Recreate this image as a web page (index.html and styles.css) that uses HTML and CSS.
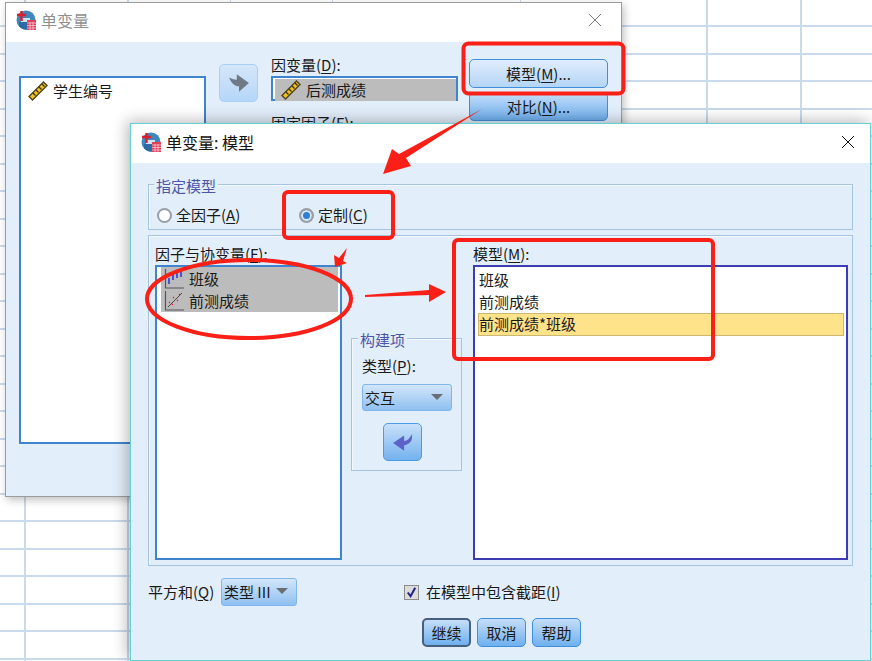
FILE: index.html
```html
<!DOCTYPE html>
<html lang="zh">
<head>
<meta charset="utf-8">
<title>单变量: 模型</title>
<link rel="stylesheet" href="styles.css">
</head>
<body>
<svg width="0" height="0" class="defs">
  <defs>
    <symbol id="app" viewBox="0 0 20 20">
      <circle cx="10" cy="10" r="9.5" fill="#3f86bd"/>
      <path d="M3 16a9.5 9.5 0 0 0 11 3V12H3z" fill="#2b6aa3"/>
      <rect x="5" y="8" width="9" height="4" fill="#cfe3f3"/>
      <path d="M5.5 1v10M1 5h9" stroke="#d8202c" stroke-width="2.4" fill="none"/>
      <rect x="11" y="10" width="9" height="10" fill="#e0405c"/>
      <path d="M11 13h9M11 15.5h9M11 18h9M14 12v8M17 12v8" stroke="#f7c4cd" stroke-width=".8"/>
    </symbol>
    <symbol id="ruler" viewBox="0 0 20 20">
      <path d="M1 15.500 15.500 1l3.500 3.500L4.500 19z" fill="#f2c21c" stroke="#4a4420" stroke-width="1.400"/>
      <path d="M5 12l2.500 2.500M8 9l2.500 2.500M11 6l2.500 2.500M14 3l2.500 2.500" stroke="#3a3518" stroke-width="1.400"/>
    </symbol>
    <symbol id="nominal" viewBox="0 0 20 20">
      <path d="M1.500 0v19H20" stroke="#55555f" stroke-width="1.200" fill="none"/>
      <path d="M5 15V9M9 11V4M13 9V3M17 8V1" stroke="#2a3ae0" stroke-width="1.600"/>
    </symbol>
    <symbol id="scale" viewBox="0 0 20 20">
      <path d="M1.500 0v19H20" stroke="#55555f" stroke-width="1.200" fill="none"/>
      <path d="M4 16 18 2" stroke="#55403f" stroke-width="1"/>
      <path d="M5 11l1 1M8 13l1 1M9 6l1 1M13 9l1 1M15 3l1 1" stroke="#e0203a" stroke-width="1.200"/>
    </symbol>
    <symbol id="arrow" viewBox="0 0 20 20">
      <path d="M1 5c2 1 4 2 7 2V2l11 8-9 8v-5C6 13 3 10 1 5z" fill="currentColor"/>
    </symbol>
    <symbol id="back" viewBox="0 0 20 20">
      <path d="M18 3c1 5-1 9-7 10v5L1 11 11 4v5c3 0 5-2 7-6z" fill="currentColor"/>
    </symbol>
  </defs>
</svg>

<section class="window back-window">
  <header class="titlebar dim">
    <svg class="app-icon"><use href="#app"/></svg>
    <span>单变量</span>
    <svg class="close" viewBox="0 0 14 14"><path d="M1 1l12 12M13 1 1 13"/></svg>
  </header>
  <div class="back-body">
    <ul class="list back-list">
      <li class="var"><svg class="var-icon"><use href="#ruler"/></svg>学生编号</li>
    </ul>
    <button class="icon-btn gray-arrow"><svg><use href="#arrow"/></svg></button>
    <div class="back-fields">
      <div class="label dep-label">因变量(<u>D</u>):</div>
      <div class="dep-box"><div class="dep-item"><svg class="var-icon"><use href="#ruler"/></svg>后测成绩</div></div>
      <div class="label fixed">固定因子(<u>F</u>):</div>
    </div>
    <div class="back-buttons">
      <button class="btn wide light">模型(<u>M</u>)...</button>
      <button class="btn wide">对比(<u>N</u>)...</button>
    </div>
  </div>
</section>

<section class="window front-window">
  <header class="titlebar">
    <svg class="app-icon"><use href="#app"/></svg>
    <span>单变量: 模型</span>
    <svg class="close dark" viewBox="0 0 14 14"><path d="M1 1l12 12M13 1 1 13"/></svg>
  </header>
  <div class="front-body">
    <div class="group spec">
      <div class="legend">指定模型</div>
      <div class="radios">
        <label class="radio"><span class="dot"></span>全因子(<u>A</u>)</label>
        <label class="radio"><span class="dot on"></span>定制(<u>C</u>)</label>
      </div>
    </div>
    <div class="group panel">
      <div class="col col-left">
        <div class="label list-label">因子与协变量(<u>F</u>):</div>
        <ul class="list factors">
          <li class="sel"><svg class="var-icon"><use href="#nominal"/></svg>班级</li>
          <li class="sel"><svg class="var-icon"><use href="#scale"/></svg>前测成绩</li>
        </ul>
      </div>
      <div class="group build">
        <div class="legend">构建项</div>
        <div class="label">类型(<u>P</u>):</div>
        <div class="select type-select">交互<span class="caret"></span></div>
        <button class="icon-btn build-btn"><svg><use href="#back"/></svg></button>
      </div>
      <div class="col col-right">
        <div class="label list-label">模型(<u>M</u>):</div>
        <ul class="list model">
          <li>班级</li>
          <li>前测成绩</li>
          <li class="hl">前测成绩*班级</li>
        </ul>
      </div>
    </div>
    <div class="sum-row">
      <span class="sum-label">平方和(<u>Q</u>)</span>
      <div class="select sum-select">类型 III<span class="caret"></span></div>
      <label class="check"><span class="box"><svg viewBox="0 0 14 14"><path d="M3 7l3 4 5-9"/></svg></span>在模型中包含截距(<u>I</u>)</label>
    </div>
    <div class="actions">
      <button class="btn small default">继续</button>
      <button class="btn small">取消</button>
      <button class="btn small">帮助</button>
    </div>
  </div>
</section>

<svg class="marks" viewBox="0 0 872 661">
  <g fill="none" stroke="#fa2018" stroke-width="4">
    <rect x="463.500" y="43.500" width="160" height="50" rx="5"/>
    <rect x="284" y="192" width="109" height="46" rx="4"/>
    <rect x="454" y="240" width="259" height="119" rx="4"/>
    <ellipse cx="249" cy="299" rx="102" ry="39"/>
  </g>
  <g fill="#fa2018">
    <polygon points="482,109 406,158 411,166 383,174 392,149 399,154"/>
    <polygon points="335,267 334,255 339,258 347,248 343,261 347,263"/>
    <polygon points="365,295 429,290 429,284 446,292 429,302 429,295 365,297"/>
  </g>
</svg>
</body>
</html>
```
FILE: styles.css
```css
* { box-sizing: border-box; }
html, body { margin: 0; height: 100%; }
body {
  position: relative;
  width: 872px;
  height: 661px;
  overflow: hidden;
  font: 15px/20px "Noto Sans CJK SC", "Liberation Sans", sans-serif;
  color: #1a1a1a;
  background-color: #fff;
  background-image:
    repeating-linear-gradient(to bottom, transparent 0 25px, #c9daec 25px 27px, transparent 27px 27.5px),
    linear-gradient(to right, transparent 0 24px, #c9daec 24px 26px, transparent 26px 127px, #c9daec 127px 129px, transparent 129px 230px, #c9daec 230px 231px, transparent 231px 332px, #c9daec 332px 333px, transparent 333px 520px, #c9daec 520px 521px, transparent 521px 706px, #c9daec 706px 708px, transparent 708px 800px, #c9daec 800px 802px, transparent 802px);
}
.defs { position: absolute; }
u { text-underline-offset: 2px; }
ul { list-style: none; margin: 0; padding: 0; }
button { font: inherit; color: inherit; padding: 0; cursor: default; }

.window { position: absolute; background: #e2eefa; }
.back-window {
  left: 5px; top: 2px; width: 617px; height: 495px;
  border: 1px solid #9c9c9c;
  box-shadow: 2px 3px 8px rgba(0, 0, 0, .25);
}
.front-window {
  left: 130px; top: 123px; width: 741px; height: 538px;
  border: 1px solid #66d0d4;
  box-shadow: -3px -2px 14px rgba(0, 0, 0, .28);
}
.titlebar {
  display: flex; align-items: center; height: 39px;
  padding: 0 12px 3px 10px; background: #fff; font-size: 16px; color: #111;
}
.titlebar.dim { color: #8f8f8f; padding-bottom: 5px; }
.app-icon { width: 20px; height: 20px; margin-right: 5px; }
.close { width: 14px; height: 14px; margin-left: auto; margin-right: 7px; fill: none; stroke: #777; stroke-width: 1; }
.close.dark { stroke: #111; margin-right: 3px; }

.list { background: #fff; border: 2px solid #3f84cd; }
.var-icon { width: 20px; height: 20px; margin-right: 5px; flex: none; }
.var, .dep-item, .sel { display: flex; align-items: center; }

.back-body { display: flex; align-items: flex-start; padding: 13px 0 0 13px; }
.back-list { width: 187px; height: 368px; margin-top: 21px; padding: 3px 0 0 7px; }
.gray-arrow { margin: 9px 13px 0; color: #6f7a86; }
.icon-btn {
  display: flex; align-items: center; justify-content: center;
  width: 39px; height: 38px; border: 1px solid #a9cff3; border-radius: 5px;
  background: linear-gradient(#d5e7fa, #b5d6f8);
}
.icon-btn svg { width: 22px; height: 22px; }
.back-fields { width: 187px; margin-right: 11px; }
.label { height: 19px; line-height: 19px; }
.dep-label { margin-bottom: 2px; }
.dep-box { height: 25px; border: 2px solid #3f84cd; background: #fff; padding: 1px 0 0 2px; }
.dep-item { height: 22px; background: #bcbcbc; padding-left: 6px; }
.fixed { margin-top: 12px; }
.back-buttons { display: flex; flex-direction: column; gap: 4px; margin-top: 4px; }

.btn {
  border: 1px solid #3f8fdc; border-radius: 5px;
  background: linear-gradient(#c5def9, #6fb0ee);
  text-align: center;
}
.btn.wide { width: 139px; height: 29px; }
.btn.light { background: linear-gradient(#e0edfc, #b4d5f6); }

.front-body { padding: 21px 17px 0 17px; }
.group { border: 1px solid #a6c3e0; box-shadow: inset 1px 1px 0 #f4f9fe; }
.legend {
  width: fit-content; height: 20px; margin: -9px 0 0 5px; padding: 0 2px;
  background: #e2eefa; color: #4b56a8; line-height: 20px;
}
.spec { height: 46px; }
.radios { display: flex; padding: 0 0 0 8px; margin-top: 8px; }
.radio { display: flex; align-items: center; height: 22px; width: 142px; }
.dot {
  width: 15px; height: 15px; margin-right: 4px; border-radius: 50%;
  border: 2px solid #9a9fa6; background: #fff;
}
.dot.on { background: #2f7fd6; box-shadow: inset 0 0 0 2px #dfe8f2; }

.panel {
  display: grid; grid-template-columns: 187px 113px 375px; column-gap: 9px;
  height: 331px; margin-top: 5px; padding: 9px 0 0 6px;
}
.col { display: flex; flex-direction: column; }
.list-label { margin-top: -1px; margin-bottom: 1px; }
.factors { height: 295px; padding: 0 0 0 4px; margin-top: 1px; }
.factors .sel { height: 22.500px; width: 177px; background: #bcbcbc; padding: 1px 0 0 3px; }
.model { height: 295px; margin-top: 1px; padding: 2px 2px 0 3px; border-color: #3c3cb4; }
.model li { height: 22px; line-height: 21px; padding-left: 1px; }
.model .hl { height: 23px; background: #ffe38a; border: 1px solid #cdb76e; padding-left: 0; line-height: 20px; }

.build { width: 111px; height: 133px; margin-top: 93px; padding-left: 10px; }
.build .legend { margin-left: -4px; }
.build .label { margin-top: 6px; }
.select {
  position: relative; display: flex; align-items: center;
  border: 1px solid #7fb6ec; border-radius: 3px; padding-left: 2px;
  background: linear-gradient(#d3e6fa, #8fc0f1);
}
.type-select { width: 90px; height: 27px; margin-top: 9px; }
.caret {
  position: absolute; right: 8px; top: 9px;
  border: 6px solid transparent; border-top: 6px solid #6a6e75; border-bottom: 0;
}
.build-btn {
  margin: 12px 0 0 21px; color: #5b63c8;
  border-color: #4d9be4; background: linear-gradient(#c8e0fa, #74b2ee);
}

.sum-row { display: flex; align-items: center; height: 28px; margin: 12px 0 0 0; }
.sum-label { width: 73px; }
.sum-select { width: 76px; height: 28px; }
.check { display: flex; align-items: center; margin-left: 107px; }
.box {
  width: 15px; height: 15px; margin-right: 7px;
  border: 1px solid #8c8c8c; background: #dcdcdc;
}
.box svg { display: block; width: 13px; height: 13px; fill: none; stroke: #23238e; stroke-width: 2.200; }

.actions { display: flex; gap: 6px; margin: 12px 0 0 274px; }
.btn.small { width: 49px; height: 29px; }
.btn.default { border: 2px solid #46607e; }

.marks { position: absolute; left: 0; top: 0; width: 872px; height: 661px; pointer-events: none; }
```
